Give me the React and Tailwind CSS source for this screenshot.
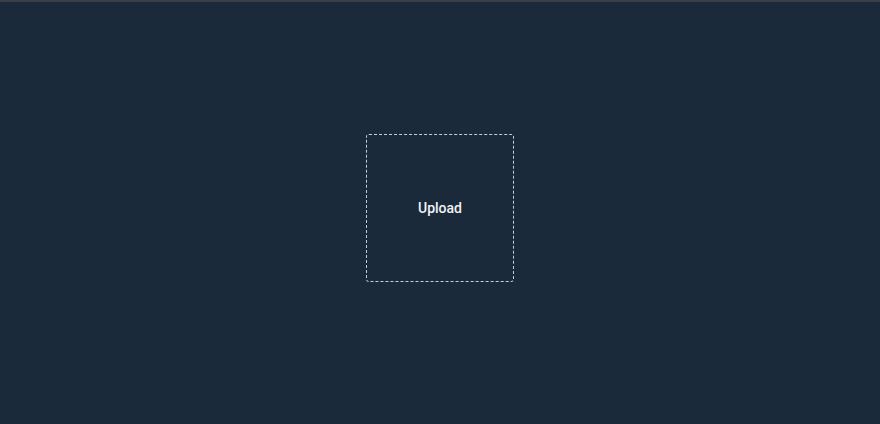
export default function App() {
  return (
    <div className="w-full h-[424px] bg-[#1a2a3b] border-t-2 border-[#3b4048] flex items-center justify-center pb-[10px] font-['Roboto',sans-serif]">
      {/* upload drop zone */}
      <button className="w-[148px] h-[148px] border border-dashed border-[#c9ced6] rounded-[3px] flex items-center justify-center text-[#f1f3f5] text-[14px] font-medium">
        Upload
      </button>
    </div>
  );
}
